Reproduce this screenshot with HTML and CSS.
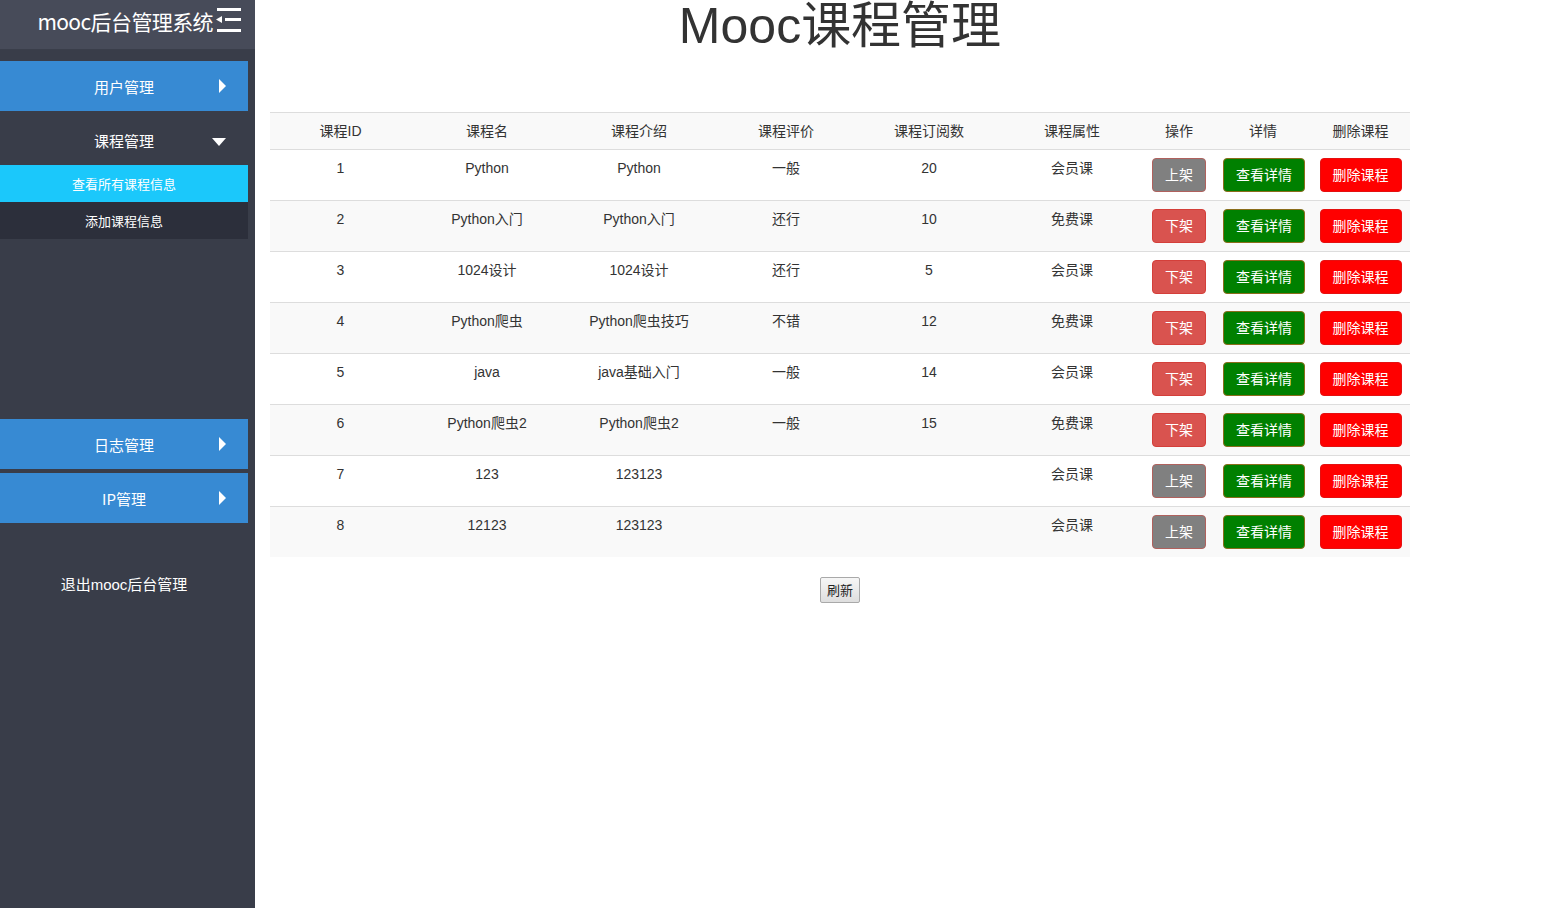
FILE: index.html
```html
<!DOCTYPE html>
<html lang="zh-CN">
<head>
<meta charset="utf-8">
<title>Mooc课程管理</title>
<link rel="stylesheet" href="styles.css">
</head>
<body>
<aside class="sidebar">
  <div class="brand">
    <span class="brand-text">mooc后台管理系统</span>
    <svg class="brand-icon" width="26" height="28" viewBox="0 0 26 28">
      <rect x="2" y="2" width="24" height="3" fill="#fff"/>
      <rect x="10" y="12" width="16" height="3" fill="#fff"/>
      <polygon points="1,13.5 7,10 7,17" fill="#fff"/>
      <rect x="2" y="23" width="24" height="3" fill="#fff"/>
    </svg>
  </div>
  <nav class="menu">
    <div class="menu-item blue"><span>用户管理</span><i class="arrow-right"></i></div>
    <div class="menu-item"><span>课程管理</span><i class="arrow-down"></i></div>
    <div class="sub-item active">查看所有课程信息</div>
    <div class="sub-item">添加课程信息</div>
    <div class="menu-item blue lower"><span>日志管理</span><i class="arrow-right"></i></div>
    <div class="menu-item blue"><span>IP管理</span><i class="arrow-right"></i></div>
    <div class="logout">退出mooc后台管理</div>
  </nav>
</aside>
<main class="main">
  <div class="container">
    <h1 class="title">Mooc课程管理</h1>
    <table class="course-table">
      <colgroup>
        <col style="width:141px"><col style="width:152px"><col style="width:152px"><col style="width:142px"><col style="width:144px"><col style="width:142px"><col style="width:72px"><col style="width:96px"><col style="width:99px">
      </colgroup>
      <thead>
        <tr><th>课程ID</th><th>课程名</th><th>课程介绍</th><th>课程评价</th><th>课程订阅数</th><th>课程属性</th><th>操作</th><th>详情</th><th>删除课程</th></tr>
      </thead>
      <tbody>
        <tr><td>1</td><td>Python</td><td>Python</td><td>一般</td><td>20</td><td>会员课</td><td><button class="btn btn-gray">上架</button></td><td><button class="btn btn-green">查看详情</button></td><td><button class="btn btn-red">删除课程</button></td></tr>
        <tr><td>2</td><td>Python入门</td><td>Python入门</td><td>还行</td><td>10</td><td>免费课</td><td><button class="btn btn-danger">下架</button></td><td><button class="btn btn-green">查看详情</button></td><td><button class="btn btn-red">删除课程</button></td></tr>
        <tr><td>3</td><td>1024设计</td><td>1024设计</td><td>还行</td><td>5</td><td>会员课</td><td><button class="btn btn-danger">下架</button></td><td><button class="btn btn-green">查看详情</button></td><td><button class="btn btn-red">删除课程</button></td></tr>
        <tr><td>4</td><td>Python爬虫</td><td>Python爬虫技巧</td><td>不错</td><td>12</td><td>免费课</td><td><button class="btn btn-danger">下架</button></td><td><button class="btn btn-green">查看详情</button></td><td><button class="btn btn-red">删除课程</button></td></tr>
        <tr><td>5</td><td>java</td><td>java基础入门</td><td>一般</td><td>14</td><td>会员课</td><td><button class="btn btn-danger">下架</button></td><td><button class="btn btn-green">查看详情</button></td><td><button class="btn btn-red">删除课程</button></td></tr>
        <tr><td>6</td><td>Python爬虫2</td><td>Python爬虫2</td><td>一般</td><td>15</td><td>免费课</td><td><button class="btn btn-danger">下架</button></td><td><button class="btn btn-green">查看详情</button></td><td><button class="btn btn-red">删除课程</button></td></tr>
        <tr><td>7</td><td>123</td><td>123123</td><td></td><td></td><td>会员课</td><td><button class="btn btn-gray">上架</button></td><td><button class="btn btn-green">查看详情</button></td><td><button class="btn btn-red">删除课程</button></td></tr>
        <tr><td>8</td><td>12123</td><td>123123</td><td></td><td></td><td>会员课</td><td><button class="btn btn-gray">上架</button></td><td><button class="btn btn-green">查看详情</button></td><td><button class="btn btn-red">删除课程</button></td></tr>
      </tbody>
    </table>
    <div class="refresh-row"><button class="refresh">刷新</button></div>
  </div>
</main>
</body>
</html>
```

FILE: styles.css
```css
html, body {
  margin: 0;
  padding: 0;
  height: 100%;
}
body {
  display: flex;
  font-family: "Liberation Sans", "Noto Sans CJK SC", sans-serif;
  color: #333;
  background: #fff;
}
.sidebar {
  width: 255px;
  flex: 0 0 255px;
  min-height: 100vh;
  background: #393d49;
}
.brand {
  height: 50px;
  background: #474b59;
  display: flex;
  align-items: flex-start;
  justify-content: flex-end;
  padding-right: 14px;
  box-sizing: border-box;
  border-bottom: 1px solid #3a3e4a;
}
.brand-text {
  color: #fff;
  font-size: 21px;
  line-height: 24px;
  margin-top: 9px;
  font-family: "Noto Sans CJK SC", sans-serif;
  letter-spacing: -0.6px;
}
.brand-icon {
  margin-top: 6px;
  margin-left: 2px;
}
.menu {
  width: 248px;
  padding-top: 11px;
}
.menu-item {
  height: 50px;
  display: flex;
  align-items: center;
  justify-content: center;
  position: relative;
  color: #fff;
  font-size: 15px;
  font-family: "Noto Sans CJK SC", sans-serif;
  margin-bottom: 4px;
}
.menu-item.blue {
  background: #378ad3;
}
.menu-item.lower {
  margin-top: 180px;
}
.arrow-right {
  position: absolute;
  right: 22px;
  top: 18px;
  width: 0;
  height: 0;
  border-top: 7px solid transparent;
  border-bottom: 7px solid transparent;
  border-left: 7px solid #fff;
}
.arrow-down {
  position: absolute;
  right: 22px;
  top: 23px;
  width: 0;
  height: 0;
  border-left: 7px solid transparent;
  border-right: 7px solid transparent;
  border-top: 8px solid #fff;
}
.sub-item {
  height: 37px;
  display: flex;
  align-items: center;
  justify-content: center;
  color: #fff;
  font-size: 13px;
  font-family: "Noto Sans CJK SC", sans-serif;
  background: #2c2f3b;
}
.sub-item.active {
  background: #1bc8fb;
  margin-top: -4px;
}
.logout {
  text-align: center;
  color: #fff;
  font-size: 15px;
  font-family: "Liberation Sans", "Noto Sans CJK SC", sans-serif;
  margin-top: 51px;
  line-height: 22px;
}
.main {
  flex: 1;
  padding: 0 15px;
}
.container {
  width: 1140px;
}
.title {
  margin: 0;
  height: 112px;
  text-align: center;
  font-size: 50px;
  font-weight: normal;
  line-height: 52px;
  color: #333;
  font-family: "Liberation Sans", "Noto Sans CJK SC", sans-serif;
}
.course-table {
  width: 1140px;
  border-collapse: collapse;
  table-layout: fixed;
  font-size: 14px;
  margin-bottom: 20px;
}
.course-table th, .course-table td {
  text-align: center;
  vertical-align: top;
  padding: 8px;
  line-height: 20px;
  font-weight: normal;
  border-top: 1px solid #ddd;
  white-space: nowrap;
}
.course-table thead th {
  background: #f9f9f9;
  border-bottom: 1px solid #ddd;
}
.course-table tbody tr:nth-child(even) td {
  background: #f9f9f9;
}
.course-table tbody tr:first-child td {
  border-top: 0;
}
.btn {
  font-family: "Noto Sans CJK SC", sans-serif;
  font-size: 14px;
  line-height: 20px;
  height: 34px;
  padding: 5px 12px 7px;
  border-radius: 4px;
  color: #fff;
  border: 1px solid transparent;
  cursor: pointer;
  white-space: nowrap;
  vertical-align: top;
}
.btn-gray {
  background: #808080;
  border-color: #b0615d;
}
.btn-danger {
  background: #d9534f;
  border-color: #d43f3a;
}
.btn-green {
  background: #008000;
  border-color: #8a6d1b;
}
.btn-red {
  background: #ff0000;
  border-color: #e51010;
}
.refresh-row {
  text-align: center;
}
.refresh {
  font-family: "Noto Sans CJK SC", sans-serif;
  font-size: 13px;
  padding: 0 6px 2px;
  height: 26px;
  border: 1px solid #a9a9a9;
  border-radius: 2px;
  background: linear-gradient(#f6f6f6, #dedede);
  color: #222;
}
```
